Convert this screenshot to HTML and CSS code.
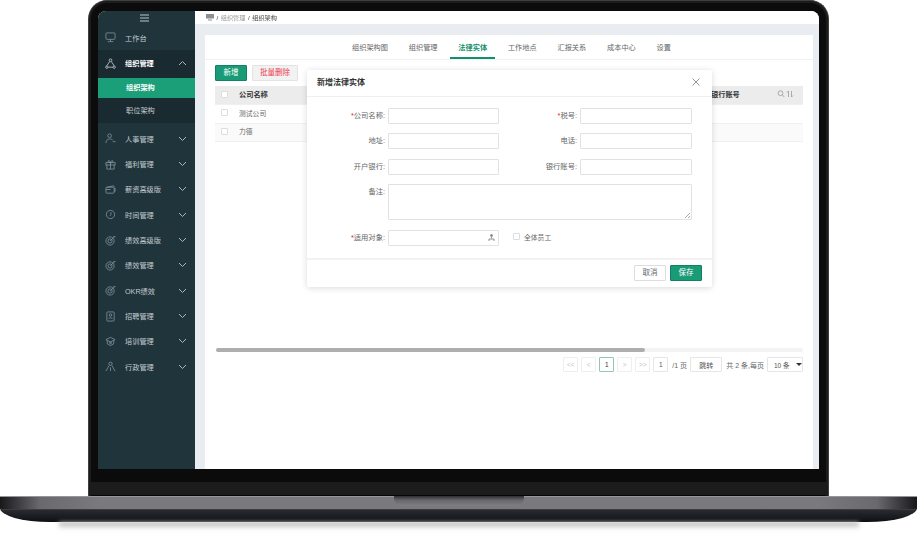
FILE: index.html
```html
<!DOCTYPE html>
<html lang="en">
<head>
    <meta charset="UTF-8">
    <meta name="viewport" content="width=device-width, initial-scale=1.0">
    <title>法律实体</title>
    <link rel="stylesheet" href="styles.css">
</head>
<body>
    <div class="laptop">
        <div class="lid">
            <div class="screen">
                <aside class="sidebar">
                    <div class="menu-toggle">
                        <svg width="9" height="8" viewBox="0 0 9 8"><path d="M0 1h9M0 4h9M0 7h9" stroke="#b9c4c8" stroke-width="1"/></svg>
                    </div>
                    <div class="nav-item nav-first">
                        <svg class="nav-icon" viewBox="0 0 12 12"><rect x="1" y="1" width="10" height="7" rx="1"/><path d="M3 10.500h6M6 8v2"/></svg>
                        <span>工作台</span>
                    </div>
                    <div class="nav-group">
                        <div class="nav-item nav-open">
                            <svg class="nav-icon nav-icon-on" viewBox="0 0 12 12"><circle cx="6" cy="2.500" r="1.500"/><path d="M5 4L2 8.500M7 4l3 4.500M3.500 10h5"/><circle cx="2" cy="10" r="1.300"/><circle cx="10" cy="10" r="1.300"/></svg>
                            <span>组织管理</span>
                            <svg class="chevron" viewBox="0 0 9 6"><path d="M1 5l3.500-3.500L8 5"/></svg>
                        </div>
                        <div class="sub-item sub-active">组织架构</div>
                        <div class="sub-item">职位架构</div>
                    </div>
                    <div class="nav-item">
                        <svg class="nav-icon" viewBox="0 0 12 12"><circle cx="5" cy="3" r="2"/><path d="M1 11c0-3 2-4.500 4-4.500s3 .6 3.500 1.500M8.500 9.500h3"/></svg>
                        <span>人事管理</span>
                        <svg class="chevron" viewBox="0 0 9 6"><path d="M1 1l3.500 3.500L8 1"/></svg>
                    </div>
                    <div class="nav-item">
                        <svg class="nav-icon" viewBox="0 0 12 12"><rect x="1" y="4" width="10" height="2.500"/><path d="M2 6.500V11h8V6.500M6 4v7M6 4C4 4 3 3 3.500 2S5.500 2 6 4c.5-2 2-3 2.500-2S8 4 6 4z"/></svg>
                        <span>福利管理</span>
                        <svg class="chevron" viewBox="0 0 9 6"><path d="M1 1l3.500 3.500L8 1"/></svg>
                    </div>
                    <div class="nav-item">
                        <svg class="nav-icon" viewBox="0 0 12 12"><rect x="1" y="3.500" width="9" height="6.500" rx="1"/><path d="M2 3.500L9 2l1.500 1M1 6h5M10 5l1-.5V8l-1 .5"/></svg>
                        <span>薪资高级版</span>
                        <svg class="chevron" viewBox="0 0 9 6"><path d="M1 1l3.500 3.500L8 1"/></svg>
                    </div>
                    <div class="nav-item">
                        <svg class="nav-icon" viewBox="0 0 12 12"><circle cx="6" cy="6" r="4.500"/><path d="M6.500 3.500V6L5.500 7.500"/></svg>
                        <span>时间管理</span>
                        <svg class="chevron" viewBox="0 0 9 6"><path d="M1 1l3.500 3.500L8 1"/></svg>
                    </div>
                    <div class="nav-item">
                        <svg class="nav-icon" viewBox="0 0 12 12"><circle cx="5.500" cy="6.500" r="4.500"/><circle cx="5.500" cy="6.500" r="2.300"/><path d="M5.500 6.500L10.500 2M9 1.800h2.500"/></svg>
                        <span>绩效高级版</span>
                        <svg class="chevron" viewBox="0 0 9 6"><path d="M1 1l3.500 3.500L8 1"/></svg>
                    </div>
                    <div class="nav-item">
                        <svg class="nav-icon" viewBox="0 0 12 12"><circle cx="5.500" cy="6.500" r="4.500"/><circle cx="5.500" cy="6.500" r="2.300"/><path d="M5.500 6.500L10.500 2M9 1.800h2.500"/></svg>
                        <span>绩效管理</span>
                        <svg class="chevron" viewBox="0 0 9 6"><path d="M1 1l3.500 3.500L8 1"/></svg>
                    </div>
                    <div class="nav-item">
                        <svg class="nav-icon" viewBox="0 0 12 12"><circle cx="5.500" cy="6.500" r="4.500"/><circle cx="5.500" cy="6.500" r="2.300"/><path d="M5.500 6.500L10.500 2M9 1.800h2.500"/></svg>
                        <span>OKR绩效</span>
                        <svg class="chevron" viewBox="0 0 9 6"><path d="M1 1l3.500 3.500L8 1"/></svg>
                    </div>
                    <div class="nav-item">
                        <svg class="nav-icon" viewBox="0 0 12 12"><rect x="2" y="1" width="8" height="10" rx="1"/><circle cx="6" cy="4.500" r="1.300"/><path d="M4 8.500c0-1.500 4-1.500 4 0"/></svg>
                        <span>招聘管理</span>
                        <svg class="chevron" viewBox="0 0 9 6"><path d="M1 1l3.500 3.500L8 1"/></svg>
                    </div>
                    <div class="nav-item">
                        <svg class="nav-icon" viewBox="0 0 12 12"><path d="M6 1.500L11 4 6 6.500 1 4zM2.500 5v3.500L6 10.500l3.500-2V5"/><circle cx="6" cy="7.500" r="1"/></svg>
                        <span>培训管理</span>
                        <svg class="chevron" viewBox="0 0 9 6"><path d="M1 1l3.500 3.500L8 1"/></svg>
                    </div>
                    <div class="nav-item">
                        <svg class="nav-icon" viewBox="0 0 12 12"><circle cx="6" cy="3" r="1.800"/><path d="M1 11L4.500 5M11 11L7.500 5M6 7v4"/></svg>
                        <span>行政管理</span>
                        <svg class="chevron" viewBox="0 0 9 6"><path d="M1 1l3.500 3.500L8 1"/></svg>
                    </div>
                </aside>

                <main class="main">
                    <div class="crumbs">
                        <svg width="8" height="7" viewBox="0 0 8 7"><rect width="8" height="4.500" fill="#8a9094"/><path d="M2 6h4" stroke="#8a9094"/></svg>
                        <span class="crumb-sep">/</span>
                        <span class="crumb-link">组织管理</span>
                        <span class="crumb-sep">/</span>
                        <span class="crumb-now">组织架构</span>
                    </div>

                    <div class="panel">
                        <nav class="tabs">
                            <div class="tab">组织架构图</div>
                            <div class="tab">组织管理</div>
                            <div class="tab tab-active">法律实体</div>
                            <div class="tab">工作地点</div>
                            <div class="tab">汇报关系</div>
                            <div class="tab">成本中心</div>
                            <div class="tab">设置</div>
                        </nav>

                        <div class="content">
                            <div class="toolbar">
                                <button class="btn btn-green">新增</button>
                                <button class="btn btn-danger">批量删除</button>
                            </div>

                            <div class="table-area">
                                <div class="row row-head">
                                    <span class="check"></span>
                                    <span class="cell-name">公司名称</span>
                                    <span class="cell-bank">银行账号</span>
                                    <svg class="head-icons" width="17" height="8" viewBox="0 0 17 8"><circle cx="3.500" cy="3.200" r="2.400"/><path d="M5.300 5l2 2M11.500 7V1L10 2.500M14.500 1v6L16 5.500"/></svg>
                                </div>
                                <div class="row">
                                    <span class="check"></span>
                                    <span class="cell-name">测试公司</span>
                                </div>
                                <div class="row row-alt">
                                    <span class="check"></span>
                                    <span class="cell-name">力德</span>
                                </div>
                            </div>

                            <div class="scrollbar">
                                <div class="scroll-thumb" style="width: 73%"></div>
                            </div>

                            <div class="pager">
                                <span class="page-btn page-off">&lt;&lt;</span>
                                <span class="page-btn page-off">&lt;</span>
                                <span class="page-btn page-on">1</span>
                                <span class="page-btn page-off">&gt;</span>
                                <span class="page-btn page-off">&gt;&gt;</span>
                                <span class="page-btn page-input">1</span>
                                <span class="page-text page-total">/1 页</span>
                                <span class="page-btn page-go">跳转</span>
                                <span class="page-text">共 2 条,每页</span>
                                <span class="page-btn page-size">10 条<i class="caret"></i></span>
                            </div>
                        </div>

                        <div class="modal">
                            <div class="modal-head">
                                <span>新增法律实体</span>
                                <svg width="8" height="8" viewBox="0 0 8 8"><path d="M.5.5l7 7M7.500.5l-7 7" stroke="#8c8c8c" stroke-width=".9"/></svg>
                            </div>
                            <form class="modal-form">
                                <label class="field-label"><em>*</em>公司名称:</label>
                                <span class="input"></span>
                                <label class="field-label"><em>*</em>税号:</label>
                                <span class="input"></span>

                                <label class="field-label">地址:</label>
                                <span class="input"></span>
                                <label class="field-label">电话:</label>
                                <span class="input"></span>

                                <label class="field-label">开户银行:</label>
                                <span class="input"></span>
                                <label class="field-label">银行账号:</label>
                                <span class="input"></span>

                                <label class="field-label">备注:</label>
                                <span class="input input-area">
                                    <svg width="5" height="5" viewBox="0 0 5 5"><path d="M0 5l5-5M3 5l2-2" stroke="#888" stroke-width=".7"/></svg>
                                </span>

                                <label class="field-label"><em>*</em>适用对象:</label>
                                <span class="input input-picker">
                                    <svg width="7" height="7" viewBox="0 0 7 7"><circle cx="3.500" cy="1.500" r="1.300" fill="#777"/><path d="M3.500 3v1.500M1 7V5h5v2" fill="none" stroke="#777" stroke-width=".8"/></svg>
                                </span>
                                <div class="all-staff">
                                    <span class="check"></span>
                                    <span>全体员工</span>
                                </div>
                            </form>
                            <div class="modal-foot">
                                <button class="btn btn-plain">取消</button>
                                <button class="btn btn-green">保存</button>
                            </div>
                        </div>
                    </div>
                </main>
            </div>
            <div class="chin-top"></div>
            <div class="chin-low"></div>
        </div>

        <div class="base">
            <div class="base-top"><div class="notch"></div></div>
            <div class="base-low"></div>
        </div>
        <div class="base-shadow"></div>
    </div>
</body>
</html>
```

FILE: styles.css
```css
* {
    box-sizing: border-box;
}

body {
    margin: 0;
    padding: 0;
    background: #fff;
    font-family: "Liberation Sans", "Noto Sans CJK SC", sans-serif;
    font-size: 7px;
    color: #555;
    overflow: hidden;
}

.laptop {
    width: 917px;
    height: 540px;
    display: flex;
    flex-direction: column;
    align-items: center;
}

/* lid and bezel */
.lid {
    width: 741px;
    height: 496px;
    padding: 10px 9px 0;
    display: flex;
    flex-direction: column;
    background: #0c0c0c;
    border: 1px solid #3f3f42;
    border-bottom: 0;
    border-radius: 19px 19px 0 0;
    box-shadow: inset 0 0 0 2px #1c1c1d;
}

/* the shot is a scaled down picture, so everything on the screen is a bit soft */
.screen {
    height: 458px;
    display: flex;
    background: #e9edf1;
    border-radius: 8px 8px 0 0;
    overflow: hidden;
    filter: blur(.3px);
}

.chin-top {
    height: 13px;
    margin: 0 -7px;
    background: #0b0b0b;
}

.chin-low {
    height: 14px;
    margin: 0 -7px;
    background: #1c1c1c;
    border-bottom: 1px solid #060606;
}

.base {
    width: 917px;
    height: 26px;
    flex-shrink: 0;
    overflow: hidden;
    border-radius: 0 0 50px 50px / 0 0 14px 14px;
}

.base-top {
    height: 14px;
    display: flex;
    justify-content: center;
    background: linear-gradient(90deg, #18181a 0, #2c2c30 10px, #6a6a6e 40px, #7a7a7e 100px, #7a7a7e 817px, #6a6a6e 877px, #2c2c30 907px, #18181a 100%);
    border-top: 1px solid #96969a;
    border-bottom: 1px solid #3c3c40;
}

.notch {
    width: 130px;
    height: 10px;
    margin-top: -1px;
    background: linear-gradient(#2e2e31, #66666a 40%, #808084);
    border-radius: 0 0 8px 8px;
}

.base-low {
    height: 12px;
    background: linear-gradient(#2a2b30, #17181e 70%, #0e0f14);
}

.base-shadow {
    width: 800px;
    height: 8px;
    flex-shrink: 0;
    background: linear-gradient(#a4a4a4, #e6e6e6 60%, #fff);
    filter: blur(2px);
}

/* sidebar */
.sidebar {
    width: 97px;
    flex-shrink: 0;
    background: #20343c;
    color: #c3ccd0;
    font-size: 7.2px;
}

.menu-toggle {
    height: 14px;
    display: flex;
    justify-content: center;
    align-items: center;
    padding-right: 5px;
}

.nav-item {
    height: 25.350px;
    display: flex;
    align-items: center;
    padding-left: 7px;
    padding-right: 8px;
}

.nav-first {
    height: 25px;
}

.nav-icon {
    width: 11px;
    height: 11px;
    margin-right: 9px;
    flex-shrink: 0;
    fill: none;
    stroke: #8b9da3;
    stroke-width: .8;
}

.nav-icon-on {
    stroke: #d8dfe1;
}

.chevron {
    width: 9px;
    height: 6px;
    margin-left: auto;
    fill: none;
    stroke: #a9b7bb;
    stroke-width: 1;
}

.nav-group {
    height: 73px;
    margin-bottom: 3px;
    background: #1a2a31;
}

.nav-open {
    height: 28px;
    padding-bottom: 2px;
    color: #fff;
    font-weight: bold;
}

.sub-item {
    height: 25px;
    line-height: 25px;
    padding-left: 28px;
}

.sub-active {
    height: 20px;
    line-height: 20px;
    background: #1a9f79;
    color: #fff;
    font-weight: bold;
}

/* main area */
.main {
    flex: 1;
    display: flex;
    flex-direction: column;
    min-width: 0;
}

.crumbs {
    height: 13px;
    flex-shrink: 0;
    display: flex;
    align-items: center;
    gap: 2.500px;
    padding-left: 11px;
    background: #fff;
    font-size: 6.200px;
}

.crumb-sep {
    color: #444;
}

.crumb-link {
    color: #999;
}

.crumb-now {
    color: #444;
}

.panel {
    position: relative;
    flex: 1;
    margin: 11px 6px 0 10px;
    background: #fff;
}

.tabs {
    height: 25px;
    display: flex;
    gap: 4.800px;
    padding-left: 139px;
    border-bottom: 1px solid #f1f1f1;
}

.tab {
    height: 24px;
    line-height: 26px;
    padding: 0 8px;
    font-size: 7.200px;
    color: #666;
}

.tab-active {
    color: #12906c;
    font-weight: bold;
    border-bottom: 2px solid #12906c;
}

.content {
    padding: 5px 10px 0;
}

.toolbar {
    height: 21px;
    display: flex;
    align-items: flex-start;
    gap: 5px;
}

.btn {
    height: 16px;
    padding: 0;
    font-family: inherit;
    font-size: 7.500px;
    line-height: 14px;
    border-radius: 1px;
    cursor: pointer;
}

.btn-green {
    width: 32px;
    background: #1a9b77;
    border: 1px solid #14805f;
    color: #fff;
}

.btn-danger {
    width: 46px;
    background: #f2f2f2;
    border: 1px solid #e3e3e3;
    color: #ee3a4e;
}

.btn-plain {
    width: 32px;
    background: #fff;
    border: 1px solid #ddd;
    color: #666;
}

/* table */
.table-area {
    height: 262px;
}

.row {
    height: 18.500px;
    display: flex;
    align-items: center;
    padding-left: 6px;
    padding-bottom: 2px;
    border-bottom: 1px solid #f0f0f0;
    color: #666;
    font-size: 6.800px;
}

.row-head {
    height: 19px;
    background: #ececec;
    color: #333;
    font-size: 7.200px;
    font-weight: bold;
}

.row-alt {
    background: #fafafa;
}

.check {
    width: 7px;
    height: 7px;
    flex-shrink: 0;
    background: #fff;
    border: 1px solid #ddd;
    border-radius: 1px;
}

.cell-name {
    flex: 1;
    padding-left: 11px;
}

.cell-bank {
    width: 66px;
}

.head-icons {
    margin-right: 9px;
    fill: none;
    stroke: #9a9a9a;
    stroke-width: .8;
}

.scrollbar {
    height: 4px;
    margin-left: 1px;
    background: #f3f3f3;
    border-radius: 2px;
}

.scroll-thumb {
    height: 100%;
    background: #aeaeae;
    border-radius: 2px;
}

/* pagination */
.pager {
    display: flex;
    justify-content: flex-end;
    align-items: center;
    gap: 3px;
    margin-top: 5px;
}

.page-btn {
    width: 15px;
    height: 15px;
    display: flex;
    justify-content: center;
    align-items: center;
    background: #fff;
    border: 1px solid #e6e6e6;
    border-radius: 1px;
    font-size: 6.500px;
    color: #555;
}

.page-off {
    color: #c4c4c4;
    border-color: #eee;
}

.page-on {
    border-color: #8fc9b5;
    color: #333;
}

.page-go {
    width: 32px;
    font-size: 7px;
    margin-left: 1px;
}

.page-text {
    margin-left: 1px;
    font-size: 7px;
    color: #666;
    white-space: nowrap;
}

.page-total {
    width: 14px;
}

.page-size {
    width: 36px;
    justify-content: flex-start;
    padding-left: 6px;
    white-space: nowrap;
}

.caret {
    margin-left: 6px;
    border: 3px solid transparent;
    border-top: 3px solid #333;
    border-bottom: 0;
}

/* modal */
.modal {
    position: absolute;
    left: 102px;
    top: 35px;
    width: 405px;
    height: 217px;
    display: flex;
    flex-direction: column;
    background: #fff;
    border-radius: 2px;
    box-shadow: 0 1px 6px rgba(0, 0, 0, 0.15);
}

.modal-head {
    height: 27px;
    flex-shrink: 0;
    display: flex;
    justify-content: space-between;
    align-items: center;
    padding: 0 12px 3px 10px;
    border-bottom: 1px solid #efefef;
    font-size: 8px;
    font-weight: bold;
    color: #333;
}

.modal-form {
    height: 163px;
    flex-shrink: 0;
    display: grid;
    grid-template-columns: 78px 111px 75px 112px;
    grid-template-rows: 16px 16px 16px 36px 16px;
    column-gap: 3px;
    row-gap: 9.400px;
    align-content: start;
    padding-top: 11px;
    border-bottom: 2px solid #f2f2f2;
}

.field-label {
    text-align: right;
    line-height: 15px;
    font-size: 7.300px;
    color: #666;
}

.field-label em {
    color: #ee2233;
    font-style: normal;
}

.input {
    display: flex;
    justify-content: flex-end;
    align-items: center;
    padding-right: 3px;
    border: 1px solid #e2e2e2;
    border-radius: 1px;
    background: #fff;
}

.input-area {
    grid-column: span 3;
    align-items: flex-end;
    padding-right: 1px;
    padding-bottom: 1px;
}

.all-staff {
    grid-column: span 2;
    display: flex;
    align-items: center;
    gap: 4px;
    padding-left: 11px;
    padding-bottom: 2px;
    font-size: 6.800px;
    color: #666;
}

.modal-foot {
    display: flex;
    justify-content: flex-end;
    gap: 4px;
    padding: 5px 10px 0;
}
```
